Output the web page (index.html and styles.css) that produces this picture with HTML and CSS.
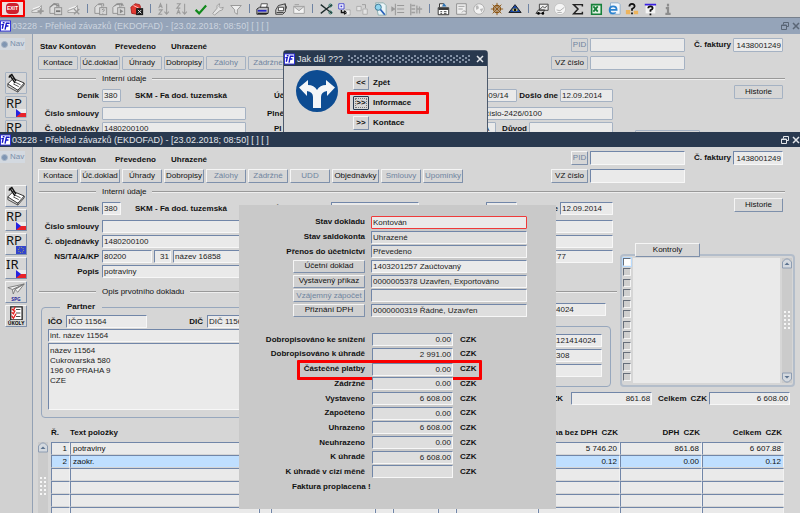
FILE: index.html
```html
<!DOCTYPE html>
<html lang="cs">
<head>
    <meta charset="utf-8">
    <title>Přehled závazků (EKDOFAD)</title>
    <link rel="stylesheet" href="styles.css">
</head>
<body>
<svg class="sprites" aria-hidden="true">
    <symbol id="logo" viewBox="0 0 12 12"><rect x=".5" y=".5" width="11" height="11" fill="#fff" stroke="#2a2ad8"/><path d="M1.500 4.500h2L2.500 9M3 2.500h2M10.500 3H7L5.500 10M6.200 6h3" stroke="#1515c8" stroke-width="1.500" fill="none"/></symbol>
    <symbol id="restore" viewBox="0 0 8 8"><path d="M2.500 2.500v-2h5v4h-2M.5 3h5v4.500h-5zM.5 3.500h5" fill="none" stroke="currentColor"/></symbol>
    <symbol id="close" viewBox="0 0 8 8"><path d="M1 1l6 6M7 1L1 7" fill="none" stroke="currentColor" stroke-width="1.500"/></symbol>
    <symbol id="note" viewBox="0 0 22 22"><path d="M2 12l6-6 12 5-7 8z" fill="#fff" stroke="#222"/><path d="M2 12v3l11 6v-3M13 21l7-8v-2M8 12l6 3M10 10l6 3" fill="none" stroke="#444"/><path d="M4 2l6 9M6 1l5 8M3 5l3-3" fill="none" stroke="#111" stroke-width="1.500"/></symbol>
    <symbol id="flag-cz" viewBox="0 0 10 8"><path d="M0 0h10v4H0z" fill="#eee"/><path d="M0 4h10v4H0z" fill="#e8232a"/><path d="M0 0l5 4-5 4z" fill="#2424e0"/></symbol>
    <symbol id="flag-eu" viewBox="0 0 10 8"><path d="M0 0h10v8H0z" fill="#3344cc"/><circle cx="5" cy="4" r="2.600" fill="none" stroke="#b9b95a" stroke-dasharray="1 1"/></symbol>
    <symbol id="plane" viewBox="0 0 22 13"><path d="M2 5l18-4-7 9-3-3-2 5-1-5z" fill="#f4f4f4" stroke="#777"/><path d="M7 7l13-6-10 6" fill="#999" stroke="#777"/></symbol>
    <symbol id="tasks" viewBox="0 0 22 16"><path d="M5 1h13v15H5z" fill="#fff" stroke="#222" stroke-width="1.500"/><path d="M11 4h5M11 8h5M11 12h5" stroke="#333"/><path d="M6 3l2 2 2-4M6 7l2 2 2-4M6 11l2 3 3-5" fill="none" stroke="#e02020" stroke-width="1.500"/></symbol>
    <symbol id="rec" viewBox="0 0 16 16"><path d="M1 10l8-3 3-3v8H1z" fill="#e3e3e3" stroke="#a0a0a0"/><path d="M2 8l8-3" stroke="#fff"/></symbol>
    <symbol id="clip" viewBox="0 0 16 16"><path d="M1 6l3-3h5v10H1zM5 2h6v3" fill="#ddd" stroke="#8c8c8c"/><rect x="6.500" y="6.500" width="8" height="8" fill="#d5d5d5" stroke="#8c8c8c"/></symbol>
    <symbol id="printer" viewBox="0 0 16 16"><path d="M5 7l1-5h7l-1 5" fill="#fff" stroke="#444"/><path d="M1 8l3-2h10v6l-2 2H1z" fill="#bdbdbd" stroke="#222"/><path d="M2 10h10" stroke="#2525c8" stroke-width="2"/><path d="M2 13h12" stroke="#222" stroke-width="1.500"/></symbol>
    <symbol id="up" viewBox="0 0 10 10"><path d="M.5 9.500v-6l3-3h3l3 3v6z" fill="#d4d9df" stroke="#8e9db2"/><path d="M2.500 6.500L5 4l2.500 2.500z" fill="#5d7390"/></symbol>
    <symbol id="down" viewBox="0 0 10 10"><path d="M.5.5v6l3 3h3l3-3v-6z" fill="#d4d9df" stroke="#8e9db2"/><path d="M2.500 3.500L5 6l2.500-2.500z" fill="#5d7390"/></symbol>
</svg>

<main class="desktop">
    <nav class="toolbar" aria-label="Nástroje">
        <button class="exit" aria-label="Exit"><span>EXIT</span></button>
        <button class="tool" aria-label="Nový"><svg viewBox="0 0 16 16"><use href="#rec"/><path d="M11 7v7M7.500 10.500h7" stroke="#999" stroke-width="2"/></svg></button>
        <button class="tool" aria-label="Kopie"><svg viewBox="0 0 16 16"><use href="#clip"/><path d="M1 6l5-4 6 3" fill="none" stroke="#8c8c8c" stroke-width="1.500"/><path d="M8 10.500h5" stroke="#777" stroke-width="2"/></svg></button>
        <button class="tool" aria-label="Smazat"><svg viewBox="0 0 16 16"><use href="#rec"/><path d="M8 8l6 6M14 8l-6 6" stroke="#999" stroke-width="1.500"/></svg></button>
        <span class="sep"></span>
        <button class="tool" aria-label="Dotaz"><svg viewBox="0 0 16 16"><use href="#clip"/><path d="M9 9q2-2 3 0l-2 2.500M10 13v1" fill="none" stroke="#888"/></svg></button>
        <button class="tool" aria-label="Proveď dotaz"><svg viewBox="0 0 16 16"><use href="#clip"/><path d="M3 5q4-5 10-1l-2-3" fill="none" stroke="#888"/><path d="M9 8l4 2.500-4 2.500z" fill="#888"/></svg></button>
        <button class="tool" aria-label="Zruš dotaz"><svg viewBox="0 0 16 16"><path d="M1 6l5-4 5 1 1 3-4 8-6-1z" fill="#e23a32" stroke="#a81d1d"/><path d="M4 4l6 3" stroke="#ffd0c8"/><rect x="7" y="7" width="8" height="8" fill="#1b1b1b"/><path d="M9 9l4 4M13 9l-4 4" stroke="#fff"/></svg></button>
        <span class="sep"></span>
        <button class="tool" aria-label="Řadit vzestupně"><svg viewBox="0 0 16 16"><path d="M2 7l2-5 2 5M3 5h3M2 9h4l-4 5h4M11 2v11M8.500 11l2.500 3 2.500-3" fill="none" stroke="#9a9a9a" stroke-width="1.200"/></svg></button>
        <button class="tool" aria-label="Řadit sestupně"><svg viewBox="0 0 16 16"><path d="M2 2h4L2 7h4M2 14l2-5 2 5M3 12h3M11 2v11M8.500 11l2.500 3 2.500-3" fill="none" stroke="#9a9a9a" stroke-width="1.200"/></svg></button>
        <button class="tool" aria-label="Uložit"><svg viewBox="0 0 16 16"><path d="M3 9l4 4 8-9" fill="none" stroke="#118a1c" stroke-width="2.500"/></svg></button>
        <button class="tool" aria-label="Nastavení"><svg viewBox="0 0 16 16"><path d="M2 13l5-6q-1-4 3-5l-1 3 2 2 3-1q0 4-4 4l-6 5z" fill="#e4e4e4" stroke="#999"/></svg></button>
        <button class="tool" aria-label="Filtr"><svg viewBox="0 0 16 16"><path d="M2 4h12L9.500 9v5l-3-2V9z" fill="#eee" stroke="#909090"/></svg></button>
        <span class="sep"></span>
        <button class="tool" aria-label="Tisk"><svg viewBox="0 0 16 16"><use href="#printer"/></svg></button>
        <button class="tool" aria-label="Tisk sestavy"><svg viewBox="0 0 16 16"><path d="M2 9l3-5 8-2v9l-3 3H2z" fill="#cfcfcf" stroke="#333"/><path d="M5 6h6v4H5zM3 12h8" fill="#fff" stroke="#333"/><path d="M12 3q4 2 1 6" fill="none" stroke="#333"/></svg></button>
        <button class="tool" aria-label="Pošta"><svg viewBox="0 0 16 16"><path d="M2 5h12v8H2zM2 5l6 5 6-5M3 3h5" fill="#f3f3f3" stroke="#9b9b9b"/></svg></button>
        <span class="sep"></span>
        <button class="tool" aria-label="Vyjmout"><svg viewBox="0 0 16 16"><path d="M2 3l9 7M2 13l9-7M11 6l4-3M11 10l4 3" stroke="#1d2b2b" stroke-width="1.500"/><circle cx="13" cy="4" r="1.700" fill="none" stroke="#1f6b5f"/><circle cx="13" cy="12" r="1.700" fill="none" stroke="#1f6b5f"/></svg></button>
        <button class="tool" aria-label="Kopírovat"><svg viewBox="0 0 16 16"><path d="M2 2h6v6H2z" fill="#fff" stroke="#3b3bd0"/><path d="M4 4h2v2H4z" fill="#3b3bd0"/><path d="M5 9v3h4M8 10l3 2-3 2" fill="none" stroke="#111" stroke-width="1.500"/><path d="M10 9h5v6h-3" fill="#eee" stroke="#aaa"/></svg></button>
        <button class="tool" aria-label="Vložit"><svg viewBox="0 0 16 16"><path d="M2 5h5v5H2zM9 8h5v6H9z" fill="#e4e4e4" stroke="#aaa"/><path d="M8 3h4v4" fill="none" stroke="#999"/></svg></button>
        <button class="tool" aria-label="Hledat"><svg viewBox="0 0 16 16"><path d="M3 1h9l3 3v11H6z" fill="#e9f4f8" stroke="#8aa"/><circle cx="6" cy="6" r="3.500" fill="#8fd4ee" stroke="#33708f"/><path d="M8.500 8.500l5 6" stroke="#2860b8" stroke-width="2"/></svg></button>
        <button class="tool" aria-label="Odsadit"><svg viewBox="0 0 16 16"><path d="M5 2v13M7 4h8M7 8h8M7 12h8M1 6l3 2-3 2z" fill="#999" stroke="#999" stroke-width="1.200"/></svg></button>
        <button class="tool" aria-label="Seznam"><svg viewBox="0 0 16 16"><path d="M2 2v13M3 4h4M3 8h4M3 12h4M9 4v9M9 8h6M12 5v8" stroke="#a0a0a0" stroke-width="1.500"/></svg></button>
        <span class="sep"></span>
        <button class="tool" aria-label="Kalendář"><svg viewBox="0 0 16 16"><path d="M2.500 6.500h12v8h-12zM4 6V2h5" fill="#fff" stroke="#222"/><path d="M3 8h11" stroke="#222" stroke-width="2"/><path d="M5 11h2M9 11h3M5 13h2M9 13h3" stroke="#333"/><path d="M9 1l3 4H7z" fill="#2c74b8"/></svg></button>
        <button class="tool" aria-label="Dokument"><svg viewBox="0 0 16 16"><path d="M3 2h11v12H3z" fill="#eee" stroke="#888"/><path d="M5 5h7M5 8h5M9 12l2-2 3 1" fill="none" stroke="#999"/></svg></button>
        <button class="tool" aria-label="Web"><svg viewBox="0 0 16 16"><circle cx="8" cy="8" r="6" fill="#f3f3f3" stroke="#aaa"/><path d="M4 4l3 0 1 3-3 2zM9 8l4-1-2 5z" fill="#b9b9b9"/></svg></button>
        <button class="tool" aria-label="Navigace"><svg viewBox="0 0 16 16"><circle cx="8" cy="8" r="4" fill="none" stroke="#8b5410" stroke-width="1.500"/><path d="M8 1v14M1 8h14M3 3l10 10M13 3L3 13" stroke="#8b5410"/></svg></button>
        <button class="tool" aria-label="Náhled"><svg viewBox="0 0 16 16"><path d="M8 3l7 9H1z" fill="#1b4aa8" stroke="#111"/><ellipse cx="8" cy="9" rx="3" ry="1.500" fill="#e9d45a"/><circle cx="8" cy="9" r="1.500" fill="#111"/></svg></button>
        <span class="sep"></span>
        <button class="tool" aria-label="Vozík"><svg viewBox="0 0 16 16"><path d="M5 2.500h10v7H5z" fill="#eee" stroke="#333"/><path d="M6 8l3-3 2 2 3-3M1 13l3-4h7l-2 4z" fill="none" stroke="#333"/><circle cx="4" cy="13" r="1.500"/><circle cx="9" cy="13" r="1.500"/></svg></button>
        <button class="tool" aria-label="Hodiny"><svg viewBox="0 0 16 16"><circle cx="8" cy="8" r="6.500" fill="#f5f5f5" stroke="#c2c2c2"/><path d="M4 9l4 1 5-4M5 12h5" fill="none" stroke="#aaa"/></svg></button>
        <button class="tool" aria-label="Součet"><svg viewBox="0 0 16 16"><path d="M13 5V3H3l5 5-5 5.500h10V11" fill="none" stroke="#222" stroke-width="1.700"/></svg></button>
        <button class="tool" aria-label="Excel"><svg viewBox="0 0 16 16"><path d="M3 3h11v11H3z" fill="#e5f2e5" stroke="#17803a" stroke-width="1.800"/><path d="M5 5l5 6M10 5l-5 6" stroke="#17803a" stroke-width="2"/></svg></button>
        <button class="tool" aria-label="Prohlížeč"><svg viewBox="0 0 16 16"><path d="M4 1h9l2 2v11H4z" fill="#f2f6fb" stroke="#8cabc8"/><path d="M3 9h8q0-4-4-4t-4 4 4 4q2 0 3-1" fill="none" stroke="#2b82cf" stroke-width="2"/></svg></button>
        <button class="tool" aria-label="Kontextová nápověda"><svg viewBox="0 0 16 16"><path d="M1 9h5v5H1zM10 10h5v4h-5z" fill="#eeb45c"/><path d="M5 5q0-3 3-3t3 3q0 1-3 3v2M8 12v2" fill="none" stroke="#111" stroke-width="2"/></svg></button>
        <button class="tool" aria-label="Nápověda"><svg viewBox="0 0 16 16"><path d="M3 3h11v10H3z" fill="#f4f4f4"/><path d="M2 3h13" stroke="#3a20e0" stroke-width="2"/><path d="M6 7q0-2 2.500-2T11 7q0 1-2.500 2.500V11M8.500 13v2" fill="none" stroke="#111" stroke-width="2"/></svg></button>
        <button class="tool" aria-label="Informace o programu"><svg viewBox="0 0 16 16"><path d="M8 2v3M5.500 7H8v6M5 13.500h6" fill="none" stroke="#8d8d8d" stroke-width="2.500"/></svg></button>
    </nav>

    <section class="window window-back">
        <header class="titlebar">
            <svg class="logo"><use href="#logo"/></svg>
            <h1>03228 - Přehled závazků (EKDOFAD) - [23.02.2018; 08:50] [ ] [ ]</h1>
            <button class="win-btn" aria-label="Obnovit"><svg><use href="#restore"/></svg></button>
            <button class="win-btn" aria-label="Zavřít"><svg><use href="#close"/></svg></button>
        </header>
        <div class="content">
            <aside class="side">
                <label class="nav-radio"><input type="radio" disabled checked> Nav</label>
                <button class="side-btn" aria-label="Poznámka"><svg class="full"><use href="#note"/></svg></button>
                <button class="side-btn">RP<svg class="flag"><use href="#flag-cz"/></svg></button>
                <button class="side-btn">RP<svg class="flag"><use href="#flag-eu"/></svg></button>
            </aside>
            <div class="form">
                <div class="head">
                    <div class="head-left">
                        <p class="status"><span>Stav</span><span class="state">Kontován</span><span class="state">Převedeno</span><span class="state">Uhrazené</span></p>
                        <div class="tabs">
                            <button>Kontace</button><button>Úč.doklad</button><button>Úhrady</button><button>Dobropisy</button><button disabled>Zálohy</button><button disabled>Zádržné</button>
                        </div>
                    </div>
                    <div class="head-right">
                        <button disabled>PID</button><input aria-label="PID"><label for="b-fakt">Č. faktury</label><input id="b-fakt" class="num" value="1438001249">
                        <button>VZ číslo</button><input aria-label="VZ číslo">
                    </div>
                </div>
                <h2 class="rule">Interní údaje</h2>
                <div class="body">
                    <div class="rows">
                        <div class="row first">
                            <label for="b-denik">Deník</label>
                            <div class="left"><input id="b-denik" class="w-denik" value="380"><b class="denik-name">SKM - Fa dod. tuzemská</b></div>
                            <span class="mid-label">Úč</span>
                            <div class="right"><input class="w-mid" aria-label="Účet"><input class="w-obd push" value="09/14" aria-label="Období"><label for="b-doslo">Došlo dne</label><input id="b-doslo" class="w-date" value="12.09.2014"></div>
                        </div>
                        <div class="row">
                            <label for="b-sml">Číslo smlouvy</label>
                            <div class="left"><input id="b-sml"></div>
                            <span class="mid-label wide-label">Plně</span>
                            <div class="right"><input class="w-mid" aria-label="Plnění"><input class="w-long push" value="číslo-2426/0100" aria-label="Číslo"></div>
                        </div>
                        <div class="row">
                            <label for="b-obj">Č. objednávky</label>
                            <div class="left"><input id="b-obj" value="1480200100"></div>
                            <span class="mid-label">Pl</span>
                            <div class="right"><input class="w-flag push" value="A" aria-label="Příznak"><label for="b-duvod" class="duvod">Důvod</label><input id="b-duvod" class="w-duvod"></div>
                        </div>
                    </div>
                    <div class="checks">
                        <button class="history">Historie</button>
                        <button class="checks-title">Kontroly</button>
                    </div>
                </div>
            </div>
        </div>
    </section>

    <section class="dialog" role="dialog" aria-labelledby="dlg-title">
        <header class="dialog-title">
            <svg class="logo"><use href="#logo"/></svg>
            <h2 id="dlg-title">Jak dál ???</h2>
            <span class="grip"></span>
            <button class="win-btn" aria-label="Zavřít"><svg><use href="#close"/></svg></button>
        </header>
        <div class="dialog-body">
            <svg class="sign" viewBox="0 0 42 42"><circle cx="21" cy="21" r="21" fill="#0d4c92"/><path d="M17 38V27q0-5-6-6v5L3 17.500 12 10v5q6 0 9 5 3-5 9-5v-5l9 7.500-8 8.500v-5q-6 1-6 6v11z" fill="#f4f6f8"/></svg>
            <div class="choices">
                <div class="choice"><button id="c-back">&lt;&lt;</button><label for="c-back">Zpět</label></div>
                <div class="choice marked"><button id="c-info" class="focus">&gt;&gt;</button><label for="c-info">Informace</label></div>
                <div class="choice"><button id="c-kont">&gt;&gt;</button><label for="c-kont">Kontace</label></div>
            </div>
        </div>
    </section>

    <section class="window window-front">
        <header class="titlebar">
            <svg class="logo"><use href="#logo"/></svg>
            <h1>03228 - Přehled závazků (EKDOFAD) - [23.02.2018; 08:50] [ ] [ ]</h1>
            <button class="win-btn" aria-label="Obnovit"><svg><use href="#restore"/></svg></button>
            <button class="win-btn" aria-label="Zavřít"><svg><use href="#close"/></svg></button>
        </header>
        <div class="content">
            <aside class="side">
                <label class="nav-radio"><input type="radio" disabled checked> Nav</label>
                <button class="side-btn" aria-label="Poznámka"><svg class="full"><use href="#note"/></svg></button>
                <button class="side-btn">RP<svg class="flag"><use href="#flag-cz"/></svg></button>
                <button class="side-btn">RP<svg class="flag"><use href="#flag-eu"/></svg></button>
                <button class="side-btn">IR<svg class="flag"><use href="#flag-cz"/></svg></button>
                <button class="side-btn pic spg"><svg><use href="#plane"/></svg><span>SPG</span></button>
                <button class="side-btn pic"><svg><use href="#tasks"/></svg><span>ÚKOLY</span></button>
            </aside>
            <div class="form">
                <div class="head">
                    <div class="head-left">
                        <p class="status"><span>Stav</span><span class="state">Kontován</span><span class="state">Převedeno</span><span class="state">Uhrazené</span></p>
                        <div class="tabs">
                            <button>Kontace</button><button>Úč.doklad</button><button>Úhrady</button><button>Dobropisy</button><button disabled>Zálohy</button><button disabled>Zádržné</button><button disabled>UDD</button><button class="wide">Objednávky</button><button disabled>Smlouvy</button><button disabled>Upomínky</button>
                        </div>
                    </div>
                    <div class="head-right">
                        <button disabled>PID</button><input aria-label="PID"><label for="fakt">Č. faktury</label><input id="fakt" class="num" value="1438001249">
                        <button>VZ číslo</button><input aria-label="VZ číslo">
                    </div>
                </div>
                <h2 class="rule">Interní údaje</h2>
                <div class="body">
                    <div class="rows">
                        <div class="row first">
                            <label for="denik">Deník</label>
                            <div class="left"><input id="denik" class="w-denik" value="380"><b class="denik-name">SKM - Fa dod. tuzemská</b></div>
                            <span class="mid-label">Úč</span>
                            <div class="right"><input class="w-mid" aria-label="Účet"><input class="w-obd push" aria-label="Období"><label for="doslo">Došlo dne</label><input id="doslo" class="w-date" value="12.09.2014"></div>
                        </div>
                        <div class="row">
                            <label for="sml">Číslo smlouvy</label>
                            <div class="left"><input id="sml"></div>
                            <span class="mid-label"></span>
                            <div class="right"><input class="w-long push" aria-label="Číslo"></div>
                        </div>
                        <div class="row">
                            <label for="obj">Č. objednávky</label>
                            <div class="left"><input id="obj" value="1480200100"></div>
                            <span class="mid-label"></span>
                            <div class="right"><input class="w-long push" aria-label="Důvod"></div>
                        </div>
                        <div class="row">
                            <label for="ns">NS/TA/A/KP</label>
                            <div class="left"><input id="ns" class="w-ns" value="80200"><input class="w-ta num" value="31" aria-label="TA"><input value="název 16858" aria-label="Název"></div>
                            <span class="mid-label"></span>
                            <div class="right"><input class="w-sym push" value="77" aria-label="Symbol"></div>
                        </div>
                        <div class="row">
                            <label for="popis">Popis</label>
                            <div class="left"><input id="popis" value="potraviny"></div>
                        </div>
                        <h2 class="rule rule-doc">Opis prvotního dokladu</h2>
                    </div>

                    <fieldset class="partner">
                        <legend>Partner</legend>
                        <div class="partner-ids">
                            <label for="ico">IČO</label><input id="ico" class="w-ico" value="IČO 11564">
                            <label for="dic" class="dic">DIČ</label><input id="dic" class="w-ico" value="DIČ 11564">
                        </div>
                        <input value="int. název 11564" aria-label="Interní název">
                        <textarea aria-label="Adresa">název 11564
Cukrovarská 580
196 00 PRAHA 9
CZE</textarea>
                    </fieldset>

                    <div class="symbols">
                        <input class="w-vs" value="4024" aria-label="Variabilní symbol">
                        <fieldset>
                            <input value="121414024" aria-label="Účet"><input value="308" aria-label="Banka"><input aria-label="Symbol">
                        </fieldset>
                    </div>

                    <div class="checks">
                        <button class="history">Historie</button>
                        <button class="checks-title">Kontroly</button>
                        <div class="checks-box">
                            <div class="ticks">
                                <input type="checkbox" class="active" aria-label="Kontrola 1"><input type="checkbox" aria-label="Kontrola 2"><input type="checkbox" aria-label="Kontrola 3"><input type="checkbox" aria-label="Kontrola 4"><input type="checkbox" aria-label="Kontrola 5"><input type="checkbox" aria-label="Kontrola 6"><input type="checkbox" aria-label="Kontrola 7"><input type="checkbox" aria-label="Kontrola 8"><input type="checkbox" aria-label="Kontrola 9"><input type="checkbox" aria-label="Kontrola 10"><input type="checkbox" aria-label="Kontrola 11"><input type="checkbox" aria-label="Kontrola 12">
                            </div>
                            <div class="checks-list"></div>
                            <div class="scroll"><svg><use href="#up"/></svg><span class="thumb"></span><svg><use href="#down"/></svg></div>
                        </div>
                    </div>

                    <div class="totals">
                        <label for="t-dph">CZK</label><input id="t-dph" class="num" value="861.68">
                        <label for="t-all">Celkem&ensp;CZK</label><input id="t-all" class="num" value="6 608.00">
                    </div>
                </div>

                <div class="items">
                    <div class="scroll"><svg><use href="#up"/></svg><span class="thumb"></span></div>
                    <table>
                        <colgroup><col class="c-no"><col><col class="c-s"><col class="c-l"><col class="c-m"><col class="c-k"><col class="c-m"><col class="c-a"><col class="c-a"><col class="c-a"><col class="c-a"></colgroup>
                        <thead>
                            <tr><th>Ř.</th><th>Text položky</th><th></th><th></th><th></th><th></th><th></th><th></th><th class="num">Cena bez DPH <span>CZK</span></th><th class="num">DPH <span>CZK</span></th><th class="num">Celkem <span>CZK</span></th></tr>
                        </thead>
                        <tbody>
                            <tr><td class="num">1</td><td>potraviny</td><td></td><td></td><td></td><td></td><td></td><td></td><td class="num">5 746.20</td><td class="num">861.68</td><td class="num">6 607.88</td></tr>
                            <tr class="selected"><td class="num">2</td><td>zaokr.</td><td></td><td></td><td></td><td></td><td></td><td></td><td class="num">0.12</td><td class="num">0.00</td><td class="num">0.12</td></tr>
                            <tr><td></td><td></td><td></td><td></td><td></td><td></td><td></td><td></td><td></td><td></td><td></td></tr>
                            <tr><td></td><td></td><td></td><td></td><td></td><td></td><td></td><td></td><td></td><td></td><td></td></tr>
                            <tr><td></td><td></td><td></td><td></td><td></td><td></td><td></td><td></td><td></td><td></td><td></td></tr>
                            <tr><td></td><td></td><td></td><td></td><td></td><td></td><td></td><td></td><td></td><td></td><td></td></tr>
                        </tbody>
                    </table>
                </div>
            </div>
        </div>
    </section>

    <section class="info">
        <div class="info-row"><label for="i1">Stav dokladu</label><input id="i1" class="current" value="Kontován"></div>
        <div class="info-row"><label for="i2">Stav saldokonta</label><input id="i2" class="ro" value="Uhrazené"></div>
        <div class="info-row"><label for="i3">Přenos do účetnictví</label><input id="i3" class="ro" value="Převedeno"></div>
        <div class="info-row"><button>Účetní doklad</button><input value="1403201257 Zaúčtovaný" aria-label="Účetní doklad"></div>
        <div class="info-row"><button>Vystavený příkaz</button><input class="ro" value="0000005378 Uzavřen, Exportováno" aria-label="Vystavený příkaz"></div>
        <div class="info-row"><button disabled>Vzájemný zápočet</button><input class="ro" aria-label="Vzájemný zápočet"></div>
        <div class="info-row"><button>Přiznání DPH</button><input class="ro" value="0000000319 Řádné, Uzavřen" aria-label="Přiznání DPH"></div>
        <div class="info-row"></div>
        <div class="info-row sum"><label for="s1">Dobropisováno ke snížení</label><input id="s1" value="0.00"><span>CZK</span></div>
        <div class="info-row sum"><label for="s2">Dobropisováno k úhradě</label><input id="s2" value="2 991.00"><span>CZK</span></div>
        <div class="info-row sum marked"><label for="s3">Částečné platby</label><input id="s3" value="0.00"><span>CZK</span></div>
        <div class="info-row sum"><label for="s4">Zádržné</label><input id="s4" value="0.00"><span>CZK</span></div>
        <div class="info-row sum"><label for="s5">Vystaveno</label><input id="s5" value="6 608.00"><span>CZK</span></div>
        <div class="info-row sum"><label for="s6">Započteno</label><input id="s6" value="0.00"><span>CZK</span></div>
        <div class="info-row sum"><label for="s7">Uhrazeno</label><input id="s7" value="6 608.00"><span>CZK</span></div>
        <div class="info-row sum"><label for="s8">Neuhrazeno</label><input id="s8" value="0.00"><span>CZK</span></div>
        <div class="info-row sum"><label for="s9">K úhradě</label><input id="s9" value="6 608.00"><span>CZK</span></div>
        <div class="info-row sum"><label for="s10">K úhradě v cizí měně</label><input id="s10" value=""><span>CZK</span></div>
        <p class="paid">Faktura proplacena !</p>
    </section>
</main>
</body>
</html>
```
FILE: styles.css
```css
* {
    box-sizing: border-box;
}
body {
    margin: 0;
    font-family: "Liberation Sans", Arial, sans-serif;
    font-size: 8px;
    line-height: 10px;
    color: #111;
    background: #d5d5d5;
}
h1, h2, p {
    margin: 0;
}
.sprites {
    position: absolute;
    width: 0;
    height: 0;
}
.desktop {
    position: relative;
    height: 100vh;
    overflow: hidden;
}

/* controls */
button {
    display: flex;
    align-items: center;
    justify-content: center;
    height: 14px;
    padding: 0;
    font: inherit;
    color: #111;
    white-space: nowrap;
    background: #d6d6d6;
    border: 1px solid;
    border-color: #f5f5f5 #7e90ab #7e90ab #f5f5f5;
    border-radius: 1px;
}
button:disabled {
    color: #6f849f;
}
input, textarea {
    width: 100%;
    min-width: 0;
    height: 13px;
    margin: 0;
    padding: 0 1px;
    font: inherit;
    color: #222;
    background: #eaeaea;
    border: 1px solid;
    border-color: #7186a8 #f7f7f7 #f7f7f7 #7186a8;
    border-radius: 1px;
    outline: none;
}
label, b, .mid-label, .status {
    font-weight: bold;
    white-space: nowrap;
}
.num {
    text-align: right;
}

/* toolbar */
.toolbar {
    display: flex;
    align-items: center;
    height: 18px;
    background: #d1d1d1;
    border-bottom: 1px solid #77808c;
}
.toolbar button {
    flex: none;
    background: none;
    border: 0;
}
.toolbar .exit {
    width: 25px;
    height: 17px;
    margin-right: 4px;
    background: #efdede;
    border: 2px solid #f50000;
}
.exit span {
    width: 13px;
    height: 11px;
    font-size: 5px;
    line-height: 11px;
    font-weight: bold;
    color: #fff;
    background: #cf1f2d;
    border-radius: 4px;
}
.tool {
    width: 18px;
}
.tool svg {
    width: 14px;
    height: 14px;
}
.sep {
    flex: none;
    width: 1px;
    height: 9px;
    margin: 0 4px;
    background: #6e83a3;
}

/* windows */
.window {
    position: absolute;
    left: 0;
    right: 0;
    bottom: 0;
    background: #d6d6d6;
}
.window-back {
    top: 18px;
    z-index: 1;
}
.window-front {
    top: 132px;
    z-index: 3;
}
.titlebar {
    display: flex;
    align-items: center;
    height: 15px;
    color: #e3e6ea;
    background: #29394f;
}
.window-back .titlebar {
    height: 16px;
    color: #ccd4df;
    background: #95a4b9;
}
.logo {
    flex: none;
    width: 11px;
    height: 12px;
    margin-right: 1px;
}
.titlebar h1 {
    flex: 1;
    font-size: 9px;
    font-weight: normal;
}
.win-btn {
    width: 8px;
    height: 8px;
    margin-left: 3px;
    color: inherit;
    background: none;
    border: 0;
}
.window-back .win-btn {
    color: #5a6676;
}
.win-btn svg {
    width: 8px;
    height: 8px;
}
.content {
    display: flex;
    height: 100%;
}
.side {
    flex: none;
    display: flex;
    flex-direction: column;
    align-items: center;
    gap: 2px;
    width: 33px;
    background: #d1d1d1;
    border-right: 1px solid #93a1b4;
}
.nav-radio {
    display: flex;
    align-items: center;
    align-self: flex-start;
    gap: 2px;
    height: 12px;
    margin: 4px 0 20px;
    padding: 0 1px;
    font-weight: normal;
    color: #7a8fab;
    background: #d3d9e0;
}
.nav-radio input {
    appearance: none;
    width: 7px;
    height: 7px;
    padding: 0;
    background: #7f96b3;
    border: 1px solid #a9b8ca;
    border-radius: 50%;
}
.side-btn {
    position: relative;
    align-items: flex-start;
    justify-content: flex-start;
    width: 22px;
    height: 22px;
    font-family: "Noto Sans", sans-serif;
    font-size: 13px;
    line-height: 12px;
}
.side-btn .full {
    width: 20px;
    height: 20px;
}
.side-btn .flag {
    position: absolute;
    right: 0;
    bottom: 0;
    width: 10px;
    height: 8px;
}
.side-btn.pic {
    flex-direction: column;
    align-items: center;
}
.pic svg {
    width: 20px;
    height: 14px;
}
.pic span {
    font-size: 5px;
    line-height: 6px;
    font-weight: bold;
}
.spg span {
    color: #2c2c9c;
}

/* form */
.form {
    flex: 1;
    min-width: 0;
    padding: 4px 5px 0;
}
.head {
    display: flex;
    justify-content: space-between;
    align-items: flex-end;
    padding-right: 12px;
}
.status {
    display: flex;
    margin: 0 0 4px 2px;
}
.state {
    width: 56px;
}
.status span:first-child {
    width: 19px;
}
.tabs {
    display: flex;
    gap: 2px;
}
.tabs button {
    width: 40px;
}
.tabs .wide {
    width: 47px;
}
.head-right {
    display: grid;
    grid-template-columns: 37px 95px 44px 50px;
    gap: 4px 2px;
    align-items: center;
}
.head-right button:disabled {
    justify-self: end;
    width: 17px;
}
.head-right label {
    text-align: right;
}
.head-right input {
    height: 14px;
}
.rule {
    display: flex;
    align-items: center;
    gap: 6px;
    margin: 4px 10px 1px 1px;
    font-size: 8px;
    font-weight: normal;
}
.rule::before, .rule::after {
    content: "";
    width: 57px;
    height: 1px;
    background: #999;
    border-bottom: 1px solid #eee;
}
.rule::after {
    flex: 1;
}
.body {
    display: grid;
    grid-template-columns: 1fr 150px 175px;
    grid-template-rows: auto auto 1fr;
    grid-template-areas: "rows rows checks" "partner symbols checks" "partner totals totals";
    column-gap: 7px;
}
.rows {
    grid-area: rows;
    display: flex;
    flex-direction: column;
    gap: 2px;
    padding-top: 4px;
}
.row {
    display: grid;
    grid-template-columns: 61px 144px 88px 1fr;
    align-items: center;
}
.row.first {
    margin-bottom: 3px;
}
.row > label {
    text-align: right;
}
.left, .right {
    display: flex;
    align-items: center;
    gap: 2px;
}
.left {
    margin-left: 3px;
    margin-right: -3px;
}
.mid-label {
    padding-left: 31px;
}
.wide-label {
    padding-left: 24px;
}
.push {
    margin-left: auto;
}
.denik-name {
    padding-left: 12px;
}
.duvod {
    margin-left: 4px;
}
.w-denik { width: 19px; flex: none; }
.w-mid { width: 88px; }
.w-obd { width: 31px; }
.w-date { width: 53px; }
.w-long { width: 130px; }
.w-flag { width: 14px; }
.w-duvod { width: 84px; }
.w-sym { width: 58px; }
.w-ns { width: 50px; flex: none; }
.w-ta { width: 17px; flex: none; }
.w-ico { width: 81px; }
.rule-doc {
    margin: 7px 0 0 1px;
}
.rule-doc::after {
    margin-right: -4px;
}

fieldset {
    min-width: 0;
    margin: 0;
    border: 1px solid #97a7bd;
    border-radius: 4px;
}
.partner {
    grid-area: partner;
    display: flex;
    flex-direction: column;
    gap: 1px;
    margin: 5px 0 0 3px;
    padding: 3px 6px 7px;
}
.partner legend {
    margin-left: 12px;
    padding: 0 7px;
    font-weight: bold;
}
.partner-ids {
    display: flex;
    align-items: center;
    gap: 4px;
}
.partner-ids .dic {
    margin-left: 38px;
}
.partner textarea {
    display: block;
    height: 67px;
    padding: 2px 1px;
    resize: none;
}
.symbols {
    grid-area: symbols;
    padding-top: 6px;
}
.symbols .w-vs {
    display: block;
    width: 52px;
    margin: 0 7px 10px auto;
}
.symbols fieldset {
    display: flex;
    flex-direction: column;
    align-items: flex-end;
    gap: 2px;
    margin-right: 2px;
    padding: 7px 8px 9px;
}
.symbols fieldset input {
    width: 48px;
}
.checks {
    grid-area: checks;
    display: flex;
    flex-direction: column;
}
.history {
    align-self: flex-end;
    width: 49px;
    margin-right: 12px;
}
.checks-title {
    z-index: 1;
    width: 65px;
    margin: 31px 0 -3px 15px;
}
.checks-box {
    flex: 1;
    display: flex;
    gap: 2px;
    padding: 2px 1px;
    border: 2px solid #b3bdca;
    border-radius: 4px;
}
.ticks {
    display: flex;
    flex-direction: column;
    justify-content: space-between;
    padding-bottom: 2px;
}
.ticks input {
    appearance: none;
    width: 8px;
    height: 8px;
    background: #cfcfcf;
    border-color: #666e7a #f4f4f4 #f4f4f4 #666e7a;
    border-radius: 0;
}
.ticks .active {
    background: #fff;
    outline: 1px solid #b8dafc;
}
.checks-list {
    flex: 1;
    background: #eaeaea;
}
.scroll {
    display: flex;
    flex-direction: column;
    align-items: center;
    width: 10px;
    background: #cbcbcb;
}
.scroll svg {
    flex: none;
    width: 10px;
    height: 11px;
}
.scroll .thumb {
    width: 6px;
    height: 20px;
    margin: auto 0;
    background: radial-gradient(circle at 1px 1px, #f6f6f6 1px, transparent 1px) 0 0 / 4px 4px;
}
.totals {
    grid-area: totals;
    display: flex;
    align-items: center;
    align-self: start;
    justify-content: flex-end;
    gap: 2px;
    padding: 5px 5px 0 0;
}
.totals input {
    width: 81px;
}
.totals input:first-of-type {
    margin: 0 4px 0 6px;
}

/* items */
.items {
    display: flex;
    gap: 3px;
    margin-right: 11px;
}
.items .scroll {
    flex: none;
    margin-top: 24px;
}
table {
    flex: 1;
    table-layout: fixed;
    border-collapse: separate;
    border-spacing: 0;
}
.c-no { width: 19px; }
.c-s { width: 12px; }
.c-l { width: 104px; }
.c-m { width: 18px; }
.c-k { width: 45px; }
.c-a { width: 82px; }
th {
    height: 24px;
    padding: 0 2px 4px 0;
    text-align: left;
    vertical-align: bottom;
    white-space: nowrap;
}
th.num {
    text-align: right;
}
th span {
    margin-left: 2px;
}
td {
    height: 13px;
    padding: 0 2px;
    line-height: 10px;
    background: #eaeaea;
    border: 1px solid;
    border-color: #7186a8 #f2f2f2 #d5d5d5 #7186a8;
}
.selected td {
    background: #bfdfff;
}

/* inactive window has flat borders */
.window-back button, .window-back input {
    border-color: #a5b2c3;
}
.window-back .win-btn {
    border: 0;
}

/* dialog */
.dialog {
    position: absolute;
    top: 50px;
    left: 283px;
    z-index: 2;
    width: 205px;
    background: #d6d6d6;
    border: 1px solid #4d5a6c;
    border-radius: 3px 3px 0 0;
}
.dialog-title {
    display: flex;
    align-items: center;
    height: 15px;
    padding-right: 3px;
    color: #e3e6ea;
    background: #29394f;
}
.dialog-title h2 {
    margin-left: 1px;
    font-size: 9px;
    font-weight: normal;
}
.grip {
    flex: 1;
    height: 8px;
    margin: 0 2px 0 5px;
    background:
        radial-gradient(circle at 1px 1px, #8492a6 1px, transparent 1px) 0 0 / 6px 4px,
        radial-gradient(circle at 1px 1px, #8492a6 1px, transparent 1px) 3px 2px / 6px 4px;
}
.dialog-body {
    display: flex;
    gap: 15px;
    padding: 4px 12px;
}
.sign {
    width: 42px;
    height: 42px;
}
.choices {
    display: flex;
    flex-direction: column;
    gap: 6px;
    padding-top: 6px;
}
.choice {
    position: relative;
    display: flex;
    align-items: center;
    gap: 4px;
}
.choice button {
    width: 16px;
    font-weight: bold;
}
.choice .focus {
    border-color: #26384f;
    outline: 1px dotted #777;
    outline-offset: -3px;
}
.marked::after {
    content: "";
    position: absolute;
    inset: -4px -18px -4px -6px;
    border: 3px solid #f90000;
    border-radius: 1px;
}

/* info panel */
.info {
    position: absolute;
    top: 205px;
    left: 239px;
    z-index: 4;
    display: grid;
    grid-template-rows: repeat(19, 1fr);
    width: 317px;
    height: 304px;
    padding: 10px 29px 15px 12px;
    background: #c9c9c9;
}
.info-row {
    position: relative;
    display: grid;
    grid-template-columns: 114px 156px;
    justify-content: space-between;
    align-items: center;
}
.info-row label {
    text-align: right;
}
.info-row button {
    justify-self: end;
    width: 72px;
    height: 13px;
    background: #d0d0d0;
}
.info-row .ro {
    background: #dedede;
}
.info-row .current {
    border-color: #ef3a3a;
}
.info-row.sum {
    grid-template-columns: 114px 81px 67px;
}
.sum input {
    text-align: right;
    background: #dedede;
}
.sum span {
    font-weight: bold;
}
.info-row.marked::after {
    inset: -2px 45px -3px 46px;
}
.paid {
    align-self: center;
    margin-left: 41px;
    font-weight: bold;
}
```
